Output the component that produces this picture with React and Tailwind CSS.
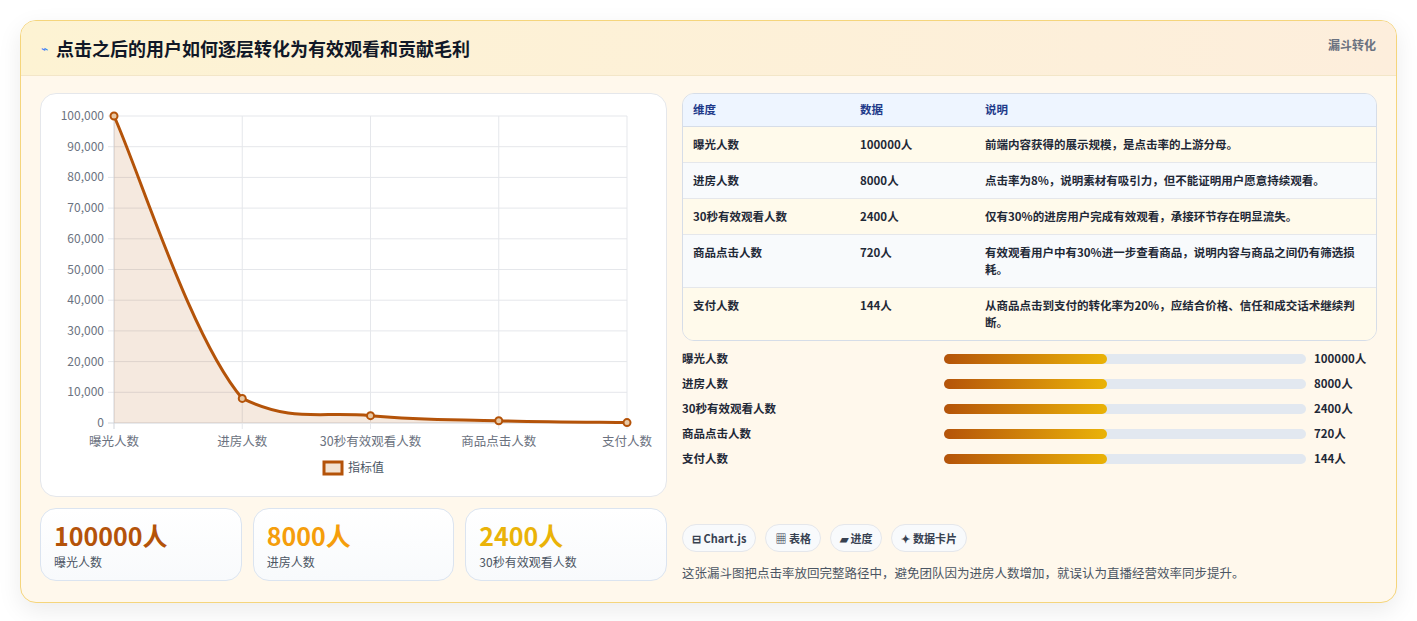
import React from 'react';

const rows = [
  { name: '曝光人数', v: 100000, desc: '前端内容获得的展示规模，是点击率的上游分母。' },
  { name: '进房人数', v: 8000, desc: '点击率为8%，说明素材有吸引力，但不能证明用户愿意持续观看。' },
  { name: '30秒有效观看人数', v: 2400, desc: '仅有30%的进房用户完成有效观看，承接环节存在明显流失。' },
  { name: '商品点击人数', v: 720, desc: '有效观看用户中有30%进一步查看商品，说明内容与商品之间仍有筛选损耗。' },
  { name: '支付人数', v: 144, desc: '从商品点击到支付的转化率为20%，应结合价格、信任和成交话术继续判断。' },
];

const X0 = 73, X1 = 586, Y0 = 22, Y1 = 329;
const pts = rows.map((r, i) => [X0 + (i * (X1 - X0)) / 4, Y1 - (r.v / 100000) * (Y1 - Y0)]);

function curve() {
  const t = 0.4;
  let d = `M${pts[0][0]},${pts[0][1]}`;
  for (let i = 0; i < pts.length - 1; i++) {
    const p0 = pts[i - 1] || pts[i], p1 = pts[i], p2 = pts[i + 1], p3 = pts[i + 2] || p2;
    const c1 = [p1[0] + ((p2[0] - p0[0]) * t) / 2, Math.min(Y1, p1[1] + ((p2[1] - p0[1]) * t) / 2)];
    const c2 = [p2[0] - ((p3[0] - p1[0]) * t) / 2, Math.min(Y1, p2[1] - ((p3[1] - p1[1]) * t) / 2)];
    d += ` C${c1[0]},${c1[1]} ${c2[0]},${c2[1]} ${p2[0]},${p2[1]}`;
  }
  return d;
}

function Chart() {
  const d = curve();
  return (
    <svg width="627" height="403" className="block">
      {[0, 1, 2, 3, 4, 5, 6, 7, 8, 9, 10].map((k) => {
        const y = Y1 - (k * (Y1 - Y0)) / 10;
        return (
          <g key={k}>
            <line x1={X0 - 6} x2={X1} y1={y} y2={y} stroke={k === 0 ? '#d1d5db' : '#e5e7eb'} />
            <text x={X0 - 10} y={y + 4} textAnchor="end" fontSize="12" fill="#6b7280">
              {(k * 10000).toLocaleString('en-US')}
            </text>
          </g>
        );
      })}
      {pts.map((p, i) => (
        <g key={i}>
          <line x1={p[0]} x2={p[0]} y1={Y0} y2={Y1 + 6} stroke={i === 0 ? '#d1d5db' : '#e5e7eb'} />
          <text x={p[0]} y={Y1 + 23} textAnchor="middle" fontSize="12.5" fill="#6b7280">{rows[i].name}</text>
        </g>
      ))}
      <path d={`${d} L${X1},${Y1} L${X0},${Y1} Z`} fill="rgba(180,83,9,0.13)" />
      <path d={d} fill="none" stroke="#b45309" strokeWidth="3" />
      {pts.map((p, i) => (
        <circle key={i} cx={p[0]} cy={p[1]} r="3.5" fill="#e8c9a6" stroke="#b45309" strokeWidth="2" />
      ))}
      <rect x="283" y="368" width="18" height="12" fill="#f3e3d3" stroke="#b45309" strokeWidth="3" />
      <text x="307" y="378" fontSize="12" fill="#4b5563">指标值</text>
    </svg>
  );
}

export default function App() {
  return (
    <div className="min-h-[621px] bg-white p-5 pt-5" style={{ fontFamily: '"Noto Sans CJK SC", "Noto Sans", sans-serif' }}>
      <div className="rounded-2xl border border-[#f5d57c] bg-[#fff8ec] shadow-[0_8px_24px_rgba(0,0,0,0.08)] overflow-hidden">
        <div className="h-[55px] flex items-center justify-between px-5 bg-gradient-to-r from-[#fdf3d3] to-[#fdeedc] border-b border-[#f3e6c8]">
          <div className="flex items-center gap-2">
            <span className="text-[#3b82f6] text-xs">⌁</span>
            <span className="text-[18px] font-bold text-[#111827]">点击之后的用户如何逐层转化为有效观看和贡献毛利</span>
          </div>
          <span className="self-start mt-[15px] text-[12px] font-bold text-[#6b7280]">漏斗转化</span>
        </div>
        <div className="flex gap-[15px] px-[19px] pt-[17px] pb-[19px]">
          <div className="w-[627px] flex flex-col gap-[11px]">
            <div className="h-[404px] rounded-2xl bg-white border border-[#e5e7eb]">
              <Chart />
            </div>
            <div className="grid grid-cols-3 gap-[11px]">
              {[['100000人', '曝光人数', 'text-[#b45309]'], ['8000人', '进房人数', 'text-[#f59e0b]'], ['2400人', '30秒有效观看人数', 'text-[#eab308]']].map(([v, l, c]) => (
                <div key={l} className="h-[73px] rounded-2xl border border-[#dbe4f0] bg-gradient-to-b from-white to-[#f8fafc] px-[13px] pt-[10px]">
                  <div className={`text-[25px] font-bold leading-[32px] ${c}`}>{v}</div>
                  <div className="text-[12px] text-[#4b5563] mt-[2px]">{l}</div>
                </div>
              ))}
            </div>
          </div>
          <div className="flex-1 flex flex-col">
            <div className="rounded-xl border border-[#d6dde8] overflow-hidden text-[11.5px] text-[#1f2937]">
              <div className="h-[33px] flex items-center bg-[#eef5ff] border-b border-[#d6dde8] font-bold text-[#1e3a8a]">
                <div className="w-[177px] pl-[10px]">维度</div>
                <div className="w-[125px]">数据</div>
                <div>说明</div>
              </div>
              {rows.map((r, i) => (
                <div key={i} className={`flex py-[9px] leading-[17px] font-bold ${i % 2 ? 'bg-[#f8fafc]' : 'bg-[#fffaeb]'} ${i < 4 ? 'border-b border-[#e5e7eb]' : ''}`}>
                  <div className="w-[177px] pl-[10px]">{r.name}</div>
                  <div className="w-[125px]">{r.v}人</div>
                  <div className="flex-1 pr-2">{r.desc}</div>
                </div>
              ))}
            </div>
            <div className="mt-[9px] flex flex-col gap-[7px]">
              {rows.map((r) => (
                <div key={r.name} className="h-[18px] flex items-center text-[11.5px] font-bold text-[#1f2937]">
                  <div className="w-[262px]">{r.name}</div>
                  <div className="w-[362px] h-[10px] rounded-full bg-[#e2e8f0]">
                    <div className="w-[45%] h-full rounded-full bg-gradient-to-r from-[#b45309] to-[#eab308]" />
                  </div>
                  <div className="ml-2">{r.v}人</div>
                </div>
              ))}
            </div>
            <div className="mt-[56px] flex gap-[9px]">
              {['⊟ Chart.js', '▦ 表格', '▰ 进度', '✦ 数据卡片'].map((t) => (
                <span key={t} className="h-[28px] px-[9px] flex items-center rounded-full border border-[#e5e7eb] bg-[#f8fafc] text-[11px] font-bold text-[#374151]">{t}</span>
              ))}
            </div>
            <div className="mt-[12px] text-[12.5px] text-[#4b5563]">这张漏斗图把点击率放回完整路径中，避免团队因为进房人数增加，就误认为直播经营效率同步提升。</div>
          </div>
        </div>
      </div>
    </div>
  );
}
